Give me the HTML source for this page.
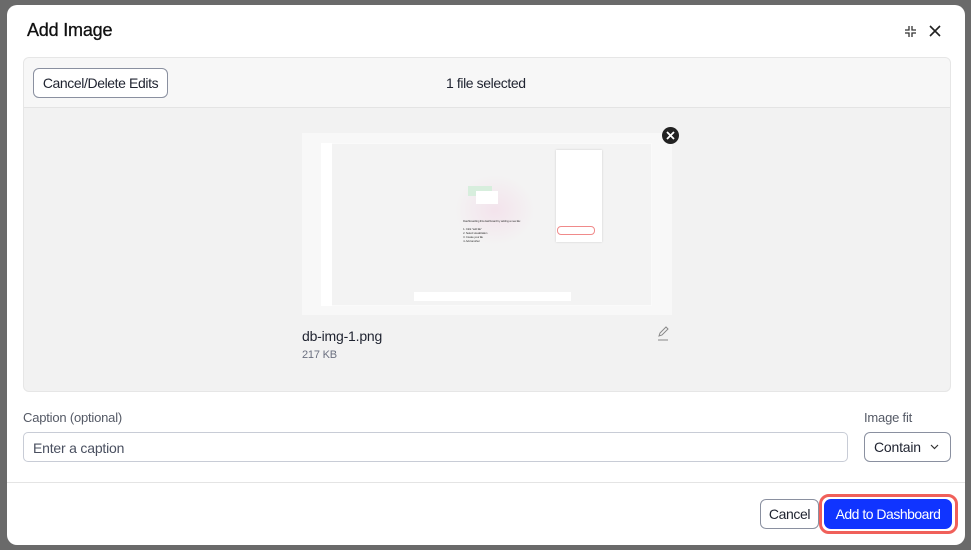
<!DOCTYPE html>
<html><head><meta charset="utf-8"><style>
*{box-sizing:border-box;margin:0;padding:0}
body{width:971px;height:550px;background:#6a6a6a;font-family:"Liberation Sans",sans-serif;position:relative;overflow:hidden;color:#1f2330;letter-spacing:-0.2px}
.modal{position:absolute;left:7px;top:5px;width:958px;height:540px;background:#fff;border-radius:10px}
.abs{position:absolute}
.btn{position:absolute;border:1px solid #8a90a0;border-radius:6px;background:#fff;font-size:14px;color:#1f2330;display:flex;align-items:center;justify-content:center}
</style></head><body>
<div class="modal"></div>
<div class="abs" style="left:27px;top:20px;font-size:18px;color:#111;-webkit-text-stroke:0.3px #111">Add Image</div>
<svg class="abs" style="left:904px;top:25px" width="13" height="13" viewBox="0 0 13 13" stroke="#333" stroke-width="1.3" fill="none"><path d="M5 1v4H1M8 1v4h4M5 12V8H1M8 12V8h4"/></svg>
<svg class="abs" style="left:929px;top:25px" width="12" height="12" viewBox="0 0 12 12" stroke="#222" stroke-width="1.6"><path d="M1 1l10 10M11 1L1 11"/></svg>

<div class="abs" style="left:23px;top:57px;width:928px;height:335px;background:#f2f2f2;border:1px solid #e6e6e6;border-radius:6px;overflow:hidden">
  <div style="height:50px;background:#f7f7f7;border-bottom:1px solid #e4e4e4"></div>
</div>
<div class="btn" style="left:33px;top:68px;width:135px;height:30px;letter-spacing:-0.4px">Cancel/Delete Edits</div>
<div class="abs" style="left:446px;top:75px;font-size:14px;letter-spacing:-0.4px">1 file selected</div>

<div class="abs" style="left:302px;top:133px;width:370px;height:182px;background:#f8f8f8"></div>
<div class="abs" style="left:321px;top:143px;width:331px;height:163px;background:#f3f3f3;border:1px solid #fafafa"></div>
<div class="abs" style="left:321px;top:143px;width:11px;height:163px;background:#fff"></div>
<div class="abs" style="left:455px;top:175px;width:80px;height:70px;border-radius:50%;background:radial-gradient(#f3e3ec,#f3f3f3 70%)"></div>
<div class="abs" style="left:468px;top:186px;width:24px;height:10px;background:#d7eedd"></div>
<div class="abs" style="left:476px;top:191px;width:22px;height:13px;background:#fff"></div>
<div class="abs" style="left:463px;top:219px;font-size:3px;line-height:4px;color:#444">Dashboarding this dashboard by adding a new tile:<br><br>1. Click "add tile"<br>2. Select visualization<br>3. Create your tile<br>4. Add another</div>
<div class="abs" style="left:556px;top:150px;width:46px;height:92px;background:#fff;box-shadow:0 0 2px #ccc"></div>
<div class="abs" style="left:557px;top:226px;width:38px;height:9px;border:1px solid #f08a8a;border-radius:4px"></div>
<div class="abs" style="left:414px;top:292px;width:157px;height:9px;background:#fff"></div>
<div class="abs" style="left:662px;top:127px;width:17px;height:17px;border-radius:50%;background:#222"></div>
<svg class="abs" style="left:666px;top:131px" width="9" height="9" viewBox="0 0 9 9" stroke="#fff" stroke-width="1.8"><path d="M1 1l7 7M8 1L1 8"/></svg>

<div class="abs" style="left:302px;top:328px;font-size:14px">db-img-1.png</div>
<div class="abs" style="left:302px;top:349px;font-size:11px;color:#6b7080">217 KB</div>
<svg class="abs" style="left:656px;top:326px" width="14" height="15" viewBox="0 0 14 15" stroke="#888" stroke-width="1" fill="none"><path d="M3 10l1-3 6-6 2 2-6 6-3 1zM2 14h10"/></svg>

<div class="abs" style="left:23px;top:410px;font-size:13px;color:#555a66">Caption (optional)</div>
<div class="abs" style="left:23px;top:432px;width:825px;height:30px;border:1px solid #c8ccd6;border-radius:5px;padding:7px 9px;font-size:14px;color:#4a5060">Enter a caption</div>
<div class="abs" style="left:864px;top:410px;font-size:13px;color:#555a66">Image fit</div>
<div class="btn" style="left:864px;top:432px;width:87px;height:30px;justify-content:flex-start;padding-left:9px">Contain<svg style="margin-left:9px" width="9" height="6" viewBox="0 0 9 6" stroke="#333" stroke-width="1.2" fill="none"><path d="M1 1l3.5 3.5L8 1"/></svg></div>

<div class="abs" style="left:7px;top:482px;width:958px;height:1px;background:#e4e4e4"></div>
<div class="btn" style="left:760px;top:499px;width:59px;height:30px;letter-spacing:-0.4px">Cancel</div>
<div class="abs" style="left:819px;top:494px;width:139px;height:40px;border:3px solid #f0605a;border-radius:10px"></div>
<div class="abs" style="left:824px;top:499px;width:128px;height:30px;background:#1034ff;color:#fff;border-radius:7px;font-size:14px;letter-spacing:-0.5px;display:flex;align-items:center;justify-content:center">Add to Dashboard</div>
</body></html>
